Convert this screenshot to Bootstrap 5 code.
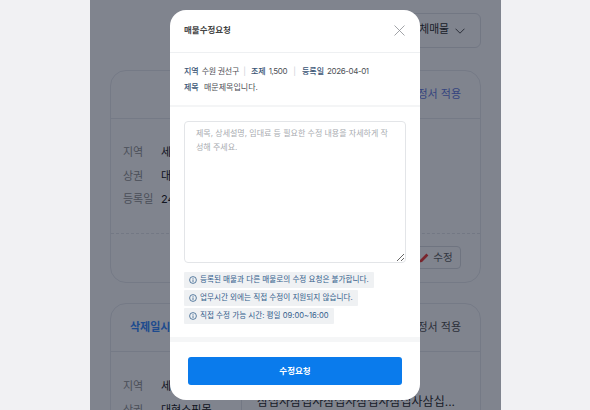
<!DOCTYPE html>
<html lang="ko">
<head>
<meta charset="utf-8">
<title>매물수정요청</title>
<link rel="stylesheet" href="https://cdn.jsdelivr.net/npm/bootstrap@5.3.0/dist/css/bootstrap.min.css">
<style>
html,body{height:410px;overflow:hidden}
body{background:#f1f1f3;font-family:Inter,"Noto Sans CJK KR",sans-serif;color:#222}
.app-col{width:411px;height:410px;margin-left:90px;background:#fff;position:relative;overflow:hidden;padding:13px 20px 0}
.filter-btn{width:92px;height:35px;margin-left:auto;border:1px solid #e2e4e9;border-radius:6px;font-size:10.8px;background:#fff;color:#333;padding-right:15px;gap:6px}
.prop-card{border:1px solid #e8eaee;border-radius:16px;background:#fff;margin-top:22px;height:213px}
.prop-card.second{margin-top:20px;height:240px}
.prop-head{height:48px;padding:0 19px;border-bottom:1px solid #e8eaee;font-size:11px}
.del-label{color:#3a8cff;font-weight:700;font-size:11px}
.apply-blue{color:#6a80e0;font-size:11px}
.apply-dark{color:#555;font-size:11px}
.prop-body{padding:22px 12px 0;font-size:11px;line-height:23.5px;height:115px;border-bottom:1px dashed #e4e6ea}
.prop-row{display:flex}
.prop-row span:first-child{width:38px;color:#959595}
.prop-body.tall{border-bottom:0;padding-top:23px}
.prop-foot{padding:12px 19px}
.edit-btn{font-size:10.5px;height:23px;width:52px;border:1px solid #dcdee2;border-radius:4px;color:#666;background:#fff;gap:4px;padding:0 0 0 2px}
.long-text{position:absolute;left:167px;top:395px;font-size:12px;line-height:14px;white-space:nowrap;color:#333}
.v-line{position:absolute;left:151px;top:390px;height:20px;border-left:1px solid #e4e6ea}
.dim{position:absolute;inset:0;background:rgba(2,10,29,.5)}
.sheet{position:absolute;left:80px;top:10px;width:250px;height:390px;background:#fff;border-radius:16px;overflow:hidden;display:flex;flex-direction:column}
.sheet-head{height:43px;padding:0 15px 1px 14px;border-bottom:1px solid #eef0f2;font-size:8.5px;font-weight:700;color:#444}
.sheet-info{height:54px;padding:10px 14px 0;border-bottom:2px solid #f4f5f6;font-size:8px;line-height:16px;color:#4c4f55}
.lab{color:#3a5475;font-weight:500;margin-right:3px}
.sep{color:#ccd0d6;margin:0 5px 0 2px}
.sep.wide{margin:0 6px 0 4px}
.num{letter-spacing:-.4px}
.tight{letter-spacing:-.3px}
.sheet-body{flex:1;padding:14px 14px 0}
.req-area{display:block;width:222px;height:142px;border:1px solid #e3e5e8;border-radius:4px;padding:5px 11px;font-size:8px;line-height:13.5px;resize:vertical;color:#333;font-family:inherit}
.req-area::placeholder{color:#a8abb0}
.notes{margin-top:9px;gap:2.5px}
.note-chip{height:15.5px;background:#eff1f3;color:#34608c;font-size:7.6px;padding:0 5px;gap:3px;width:max-content;border-radius:1px}
.note-chip svg{width:8px;height:8px}
.band{height:5px;background:#f5f6f7}
.sheet-foot{height:58px;padding:15px 18px 0}
.req-btn{display:block;width:214px;height:28px;background:#0a7bec;color:#fff;border:0;border-radius:3px;font-size:8.5px;font-weight:700}
</style>
</head>
<body>
<div class="app-col">
  <div class="d-flex">
    <button class="filter-btn d-flex align-items-center justify-content-end" type="button">전체매물
      <svg width="10" height="6" viewBox="0 0 10 6" fill="none" stroke="#555" stroke-width="1"><path d="M.5.7 5 5.2 9.5.7"/></svg>
    </button>
  </div>
  <div class="prop-card">
    <div class="prop-head d-flex align-items-center justify-content-between"><span></span><span class="apply-blue">견적서/계약정서 적용</span></div>
    <div class="prop-body">
      <div class="prop-row"><span>지역</span><span>세종특별시</span></div>
      <div class="prop-row"><span>상권</span><span>대형쇼핑몰</span></div>
      <div class="prop-row"><span>등록일</span><span>24-01-01</span></div>
    </div>
    <div class="prop-foot d-flex justify-content-end">
      <button class="edit-btn d-flex align-items-center justify-content-center" type="button">
        <svg width="10" height="10" viewBox="0 0 10 10"><path d="M.4 9.6 1 7 7.4.6l2 2L3 9z" fill="#f0403c"/></svg>수정</button>
    </div>
  </div>
  <div class="prop-card second">
    <div class="prop-head d-flex align-items-center justify-content-between"><span class="del-label">삭제일시</span><span class="apply-dark">견적서/계약정서 적용</span></div>
    <div class="prop-body tall">
      <div class="prop-row"><span>지역</span><span>세종특별시</span></div>
      <div class="prop-row"><span>상권</span><span>대형쇼핑몰</span></div>
    </div>
  </div>
  <div class="v-line"></div>
  <div class="long-text">삼십사삼십사삼십사삼십사삼십사삼십...</div>
  <div class="dim"></div>
  <div class="sheet">
    <div class="sheet-head d-flex align-items-center justify-content-between">
      <span>매물수정요청</span>
      <svg width="11" height="11" viewBox="0 0 11 11" fill="none" stroke="#8a8d92" stroke-width=".8"><path d="M.5.5l10 10M10.5.5l-10 10"/></svg>
    </div>
    <div class="sheet-info">
      <div><span class="lab">지역</span><span class="tight">수원 권선구</span><span class="sep"> |</span><span class="lab">조제</span><span class="num">1,500</span><span class="sep wide"> |</span><span class="lab">등록일</span><span class="num">2026-04-01</span></div>
      <div><span class="lab">제목</span> 매문제목입니다.</div>
    </div>
    <div class="sheet-body">
      <textarea class="req-area" placeholder="제목, 상세설명, 임대료 등 필요한 수정 내용을 자세하게 작성해 주세요."></textarea>
      <div class="notes d-flex flex-column">
        <div class="note-chip d-flex align-items-center"><svg viewBox="0 0 8 8" fill="none" stroke="#34608c" stroke-width=".8"><circle cx="4" cy="4" r="3.4"/><path d="M4 3.4V6M4 2v.8"/></svg>등록된 매물과 다른 매물로의 수정 요청은 불가합니다.</div>
        <div class="note-chip d-flex align-items-center"><svg viewBox="0 0 8 8" fill="none" stroke="#34608c" stroke-width=".8"><circle cx="4" cy="4" r="3.4"/><path d="M4 3.4V6M4 2v.8"/></svg>업무시간 외에는 직접 수정이 지원되지 않습니다.</div>
        <div class="note-chip d-flex align-items-center"><svg viewBox="0 0 8 8" fill="none" stroke="#34608c" stroke-width=".8"><circle cx="4" cy="4" r="3.4"/><path d="M4 3.4V6M4 2v.8"/></svg>직접 수정 가능 시간: 평일 09:00~16:00</div>
      </div>
    </div>
    <div class="band"></div>
    <div class="sheet-foot"><button class="req-btn" type="button">수정요청</button></div>
  </div>
</div>
</body>
</html>
